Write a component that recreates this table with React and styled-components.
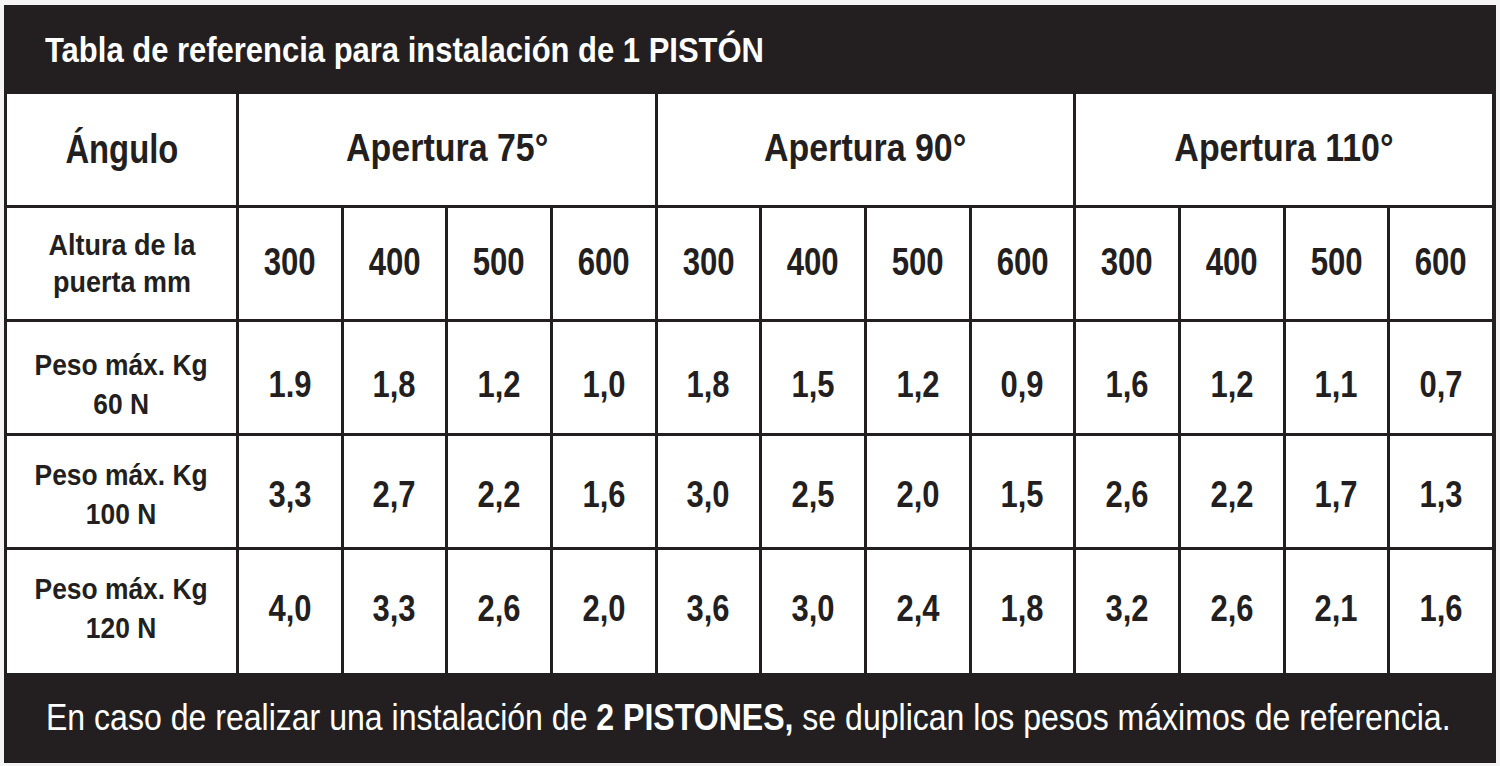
import React from "react";
import styled, { createGlobalStyle } from "styled-components";

const Global = createGlobalStyle`
  html, body { margin: 0; padding: 0; background: #f4f4f4; overflow: hidden; }
  body { font-family: "Liberation Sans", Arial, sans-serif; }
`;

const Page = styled.div`
  padding: 5px 4px 3px 4px;
  width: 1492px;
`;

const Frame = styled.div`
  background: #231f20;
  display: flex;
  flex-direction: column;
`;

const Header = styled.div`
  height: 89px;
  display: flex;
  align-items: center;
  padding-left: 41px;
  color: #fff;
  font-weight: 700;
  font-size: 35px;
  overflow: hidden;
  white-space: nowrap;
`;

const Grid = styled.div`
  display: grid;
  grid-template-columns: 229px repeat(12, 1fr);
  grid-template-rows: 111px 111px 111px 111px 123px;
  gap: 3px;
  padding: 0 4px 0 3px;
`;

const Cell = styled.div`
  background: #fff;
  color: #231f20;
  display: flex;
  align-items: center;
  justify-content: center;
  text-align: center;
  font-weight: 700;
  font-size: ${(p) => p.$size || 36}px;
  line-height: ${(p) => p.$lh || "1.2"};
  grid-column: span ${(p) => p.$span || 1};
  padding-top: ${(p) => (p.$shift > 0 ? p.$shift * 2 : 0)}px;
  padding-bottom: ${(p) => (p.$shift < 0 ? -p.$shift * 2 : 0)}px;
  overflow: hidden;
  white-space: nowrap;
`;

const Narrow = styled.span`
  display: inline-block;
  transform: scaleX(${(p) => p.$sx || 0.86});
  transform-origin: ${(p) => (p.$left ? "left center" : "center center")};
`;

const Footer = styled.div`
  height: 90px;
  display: flex;
  align-items: center;
  padding-left: 42px;
  color: #fff;
  font-size: 36px;
  font-weight: 400;
  white-space: nowrap;
  overflow: hidden;
`;

const B = styled.b`
  font-weight: 700;
`;

const heights = ["300", "400", "500", "600"];
const rows = [
  { label: "60 N", shift: 7, values: ["1.9", "1,8", "1,2", "1,0", "1,8", "1,5", "1,2", "0,9", "1,6", "1,2", "1,1", "0,7"] },
  { label: "100 N", shift: 3, values: ["3,3", "2,7", "2,2", "1,6", "3,0", "2,5", "2,0", "1,5", "2,6", "2,2", "1,7", "1,3"] },
  { label: "120 N", shift: -3, values: ["4,0", "3,3", "2,6", "2,0", "3,6", "3,0", "2,4", "1,8", "3,2", "2,6", "2,1", "1,6"] },
];

export default function App() {
  return (
    <Page>
      <Global />
      <Frame>
        <Header>
          <Narrow $left $sx={0.885}>
            Tabla de referencia para instalación de 1 PISTÓN
          </Narrow>
        </Header>
        <Grid>
          <Cell $size={40} $shift={-1}>
            <Narrow $sx={0.82}>Ángulo</Narrow>
          </Cell>
          {["75°", "90°", "110°"].map((a) => (
            <Cell key={a} $span={4} $size={39} $shift={-1}>
              <Narrow $sx={0.87}>Apertura {a}</Narrow>
            </Cell>
          ))}
          <Cell $size={29} $lh="37px">
            <Narrow $sx={0.93}>
              Altura de la
              <br />
              puerta mm
            </Narrow>
          </Cell>
          {[0, 1, 2].flatMap((g) =>
            heights.map((h) => (
              <Cell key={`${g}-${h}`} $size={38} $shift={-1}>
                <Narrow $sx={0.82}>{h}</Narrow>
              </Cell>
            ))
          )}
          {rows.flatMap((r) => [
            <Cell key={r.label} $size={29} $lh="39px" $shift={r.shift}>
              <Narrow $sx={0.91}>
                Peso máx. Kg
                <br />
                {r.label}
              </Narrow>
            </Cell>,
            ...r.values.map((v, i) => (
              <Cell key={`${r.label}-${i}`} $size={36} $shift={r.shift}>
                <Narrow $sx={0.86}>{v}</Narrow>
              </Cell>
            )),
          ])}
        </Grid>
        <Footer>
          <Narrow $left $sx={0.89}>
            En caso de realizar una instalación de <B>2 PISTONES,</B> se duplican los pesos máximos de referencia.
          </Narrow>
        </Footer>
      </Frame>
    </Page>
  );
}
